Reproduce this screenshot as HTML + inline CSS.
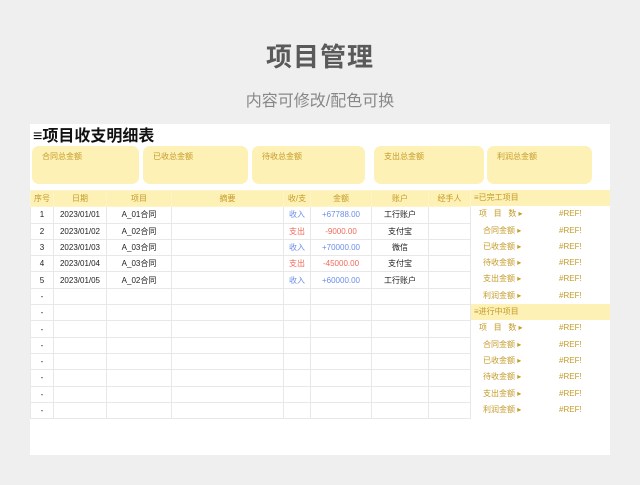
<!DOCTYPE html>
<html><head><meta charset="utf-8"><style>
*{margin:0;padding:0;box-sizing:border-box}
body{width:640px;height:485px;background:#efefef;font-family:"Liberation Sans","Noto Sans CJK SC",sans-serif;position:relative;overflow:hidden}
.t1{position:absolute;top:37px;width:640px;text-align:center;font-size:26px;font-weight:bold;color:#5a5a5a;letter-spacing:1px}
.t2{position:absolute;top:87px;width:640px;text-align:center;font-size:16px;color:#888}
.panel{position:absolute;left:30px;top:124px;width:580px;height:331px;background:#fff}
.h{position:absolute;left:3px;top:-2px;font-size:16px;font-weight:bold;color:#111}
.card{position:absolute;top:22px;height:38px;background:#fdf1b6;border-radius:7px;font-size:8px;color:#c49a28;padding:5px 0 0 10px}
table{position:absolute;border-collapse:collapse;font-size:8px;table-layout:fixed}
td{height:16.3px;border:1px solid #e8e8e8;text-align:center;color:#222;white-space:nowrap;overflow:hidden;padding:0}
tr.hd td{background:#fdf1b6;color:#c49a28;border-color:#fff3c8}
.b{color:#6b8ee8}.r{color:#ef6b5a}
.bl{border-left:1.5px solid #7fa2ef}
.bl2{border-left:1.5px solid #f2a09a}
.rp{position:absolute;left:441px;top:66px;width:139px;font-size:8px;color:#c49a28}
.rp div{height:16.3px;line-height:16.3px}
.rp .y{background:#fdf1b6;padding-left:3px}
.rp .i{position:relative}
.rp .i span{position:absolute}
</style></head><body>
<div class="t1">项目管理</div>
<div class="t2">内容可修改/配色可换</div>
<div class="panel">
<div class="h">≡项目收支明细表</div>
<div class="card" style="left:2px;width:107px">合同总金额</div>
<div class="card" style="left:113px;width:105px">已收总金额</div>
<div class="card" style="left:222px;width:113px">待收总金额</div>
<div class="card" style="left:344px;width:110px">支出总金额</div>
<div class="card" style="left:457px;width:105px">利润总金额</div>
<table style="left:0;top:66px;width:440px">
<colgroup><col style="width:23px"><col style="width:53px"><col style="width:65px"><col style="width:112px"><col style="width:27px"><col style="width:61px"><col style="width:57px"><col style="width:42px"></colgroup>
<tr class="hd"><td>序号</td><td>日期</td><td>项目</td><td>摘要</td><td>收/支</td><td>金额</td><td>账户</td><td>经手人</td></tr>
<tr><td>1</td><td>2023/01/01</td><td>A_01合同</td><td></td><td class="b bl">收入</td><td class="b">+67788.00</td><td>工行账户</td><td></td></tr>
<tr><td>2</td><td>2023/01/02</td><td>A_02合同</td><td></td><td class="r bl2">支出</td><td class="r">-9000.00</td><td>支付宝</td><td></td></tr>
<tr><td>3</td><td>2023/01/03</td><td>A_03合同</td><td></td><td class="b bl">收入</td><td class="b">+70000.00</td><td>微信</td><td></td></tr>
<tr><td>4</td><td>2023/01/04</td><td>A_03合同</td><td></td><td class="r bl2">支出</td><td class="r">-45000.00</td><td>支付宝</td><td></td></tr>
<tr><td>5</td><td>2023/01/05</td><td>A_02合同</td><td></td><td class="b bl">收入</td><td class="b">+60000.00</td><td>工行账户</td><td></td></tr>
<tr><td>-</td><td></td><td></td><td></td><td></td><td></td><td></td><td></td></tr>
<tr><td>-</td><td></td><td></td><td></td><td></td><td></td><td></td><td></td></tr>
<tr><td>-</td><td></td><td></td><td></td><td></td><td></td><td></td><td></td></tr>
<tr><td>-</td><td></td><td></td><td></td><td></td><td></td><td></td><td></td></tr>
<tr><td>-</td><td></td><td></td><td></td><td></td><td></td><td></td><td></td></tr>
<tr><td>-</td><td></td><td></td><td></td><td></td><td></td><td></td><td></td></tr>
<tr><td>-</td><td></td><td></td><td></td><td></td><td></td><td></td><td></td></tr>
<tr><td>-</td><td></td><td></td><td></td><td></td><td></td><td></td><td></td></tr>
</table>
<div class="rp">
<div class="y">≡已完工项目</div>
<div class="i"><span style="left:8px">项 &nbsp; 目 &nbsp; 数 ▸</span><span style="left:88px">#REF!</span></div>
<div class="i"><span style="left:12px">合同金额 ▸</span><span style="left:88px">#REF!</span></div>
<div class="i"><span style="left:12px">已收金额 ▸</span><span style="left:88px">#REF!</span></div>
<div class="i"><span style="left:12px">待收金额 ▸</span><span style="left:88px">#REF!</span></div>
<div class="i"><span style="left:12px">支出金额 ▸</span><span style="left:88px">#REF!</span></div>
<div class="i"><span style="left:12px">利润金额 ▸</span><span style="left:88px">#REF!</span></div>
<div class="y">≡进行中项目</div>
<div class="i"><span style="left:8px">项 &nbsp; 目 &nbsp; 数 ▸</span><span style="left:88px">#REF!</span></div>
<div class="i"><span style="left:12px">合同金额 ▸</span><span style="left:88px">#REF!</span></div>
<div class="i"><span style="left:12px">已收金额 ▸</span><span style="left:88px">#REF!</span></div>
<div class="i"><span style="left:12px">待收金额 ▸</span><span style="left:88px">#REF!</span></div>
<div class="i"><span style="left:12px">支出金额 ▸</span><span style="left:88px">#REF!</span></div>
<div class="i"><span style="left:12px">利润金额 ▸</span><span style="left:88px">#REF!</span></div>
</div>
</div>
</body></html>
